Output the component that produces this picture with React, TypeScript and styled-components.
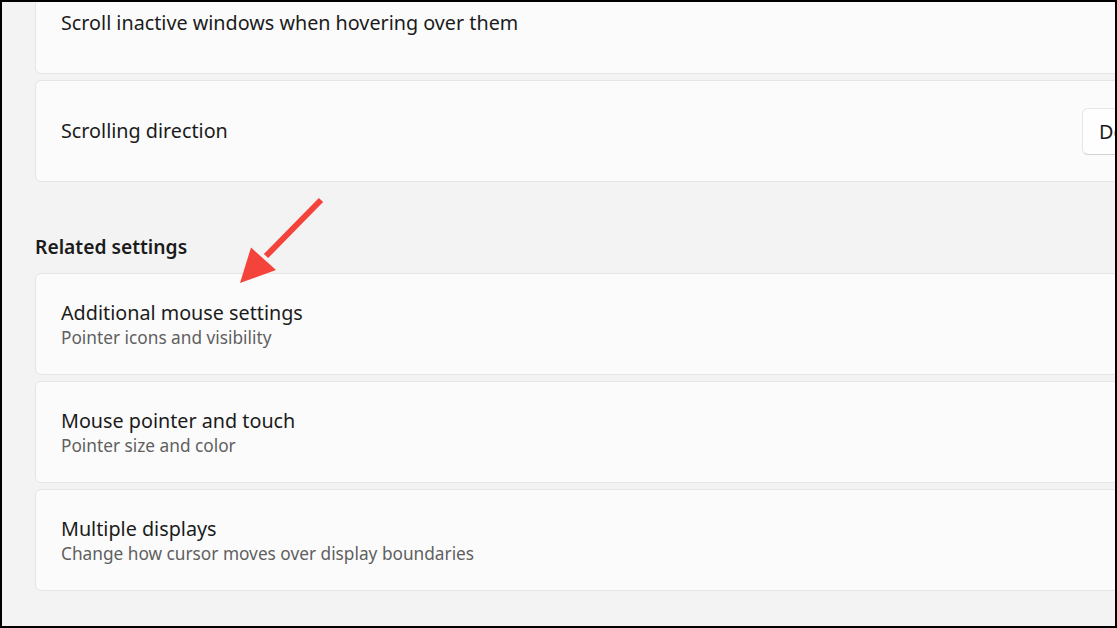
import React from "react";
import styled, { createGlobalStyle } from "styled-components";

const Global = createGlobalStyle`
  html, body { margin: 0; padding: 0; background: #000; }
  body { font-family: "Noto Sans", "Open Sans", sans-serif; }
  * { box-sizing: border-box; }
`;

const Frame = styled.div`
  position: relative;
  width: 1117px;
  height: 628px;
  border: 2px solid #000;
  background: #f3f3f3;
  overflow: hidden;
`;

const Content = styled.div`
  width: 1221px;
  margin-top: -30px;
  margin-left: 33px;
  display: flex;
  flex-direction: column;
`;

const Group = styled.div`
  display: flex;
  flex-direction: column;
  gap: 6px;
`;

const Card = styled.div`
  height: 102px;
  display: flex;
  align-items: center;
  justify-content: space-between;
  padding: 0 23px 0 25px;
  background: #fbfbfb;
  border: 1px solid #e5e5e5;
  border-radius: 6px;
`;

const TextBlock = styled.div`
  display: flex;
  flex-direction: column;
`;

const Title = styled.div`
  font-size: 19.75px;
  line-height: 28px;
  color: #1b1b1b;
`;

const Subtitle = styled.div`
  font-size: 17.25px;
  line-height: 22px;
  color: #5f5f5f;
`;

const Heading = styled.h2`
  margin: 51px 0 12px 0;
  font-size: 19.25px;
  line-height: 28px;
  font-weight: 600;
  color: #1b1b1b;
`;

const Dropdown = styled.button`
  width: 150px;
  height: 47px;
  padding: 0 0 0 16px;
  text-align: left;
  white-space: nowrap;
  overflow: hidden;
  font-family: inherit;
  font-size: 19.75px;
  color: #1b1b1b;
  background: #fefefe;
  border: 1px solid #e5e5e5;
  border-bottom-color: #d2d2d2;
  border-radius: 6px;
`;

const Arrow = styled.svg`
  position: absolute;
  left: 228px;
  top: 188px;
  width: 100px;
  height: 100px;
  overflow: visible;
`;

export default function App() {
  return (
    <>
      <Global />
      <Frame>
        <Content>
          <Group>
            <Card>
              <TextBlock>
                <Title>Scroll inactive windows when hovering over them</Title>
              </TextBlock>
            </Card>
            <Card>
              <TextBlock>
                <Title>Scrolling direction</Title>
              </TextBlock>
              <Dropdown>Down motion scrolls down</Dropdown>
            </Card>
          </Group>
          <Heading>Related settings</Heading>
          <Group>
            <Card>
              <TextBlock>
                <Title>Additional mouse settings</Title>
                <Subtitle>Pointer icons and visibility</Subtitle>
              </TextBlock>
            </Card>
            <Card>
              <TextBlock>
                <Title>Mouse pointer and touch</Title>
                <Subtitle>Pointer size and color</Subtitle>
              </TextBlock>
            </Card>
            <Card>
              <TextBlock>
                <Title>Multiple displays</Title>
                <Subtitle>Change how cursor moves over display boundaries</Subtitle>
              </TextBlock>
            </Card>
          </Group>
        </Content>
        <Arrow viewBox="0 0 100 100">
          <line x1="91" y1="10" x2="36" y2="66" stroke="#f4433a" strokeWidth="6" />
          <polygon points="10,93 21,57.5 46,80" fill="#f4433a" />
        </Arrow>
      </Frame>
    </>
  );
}
